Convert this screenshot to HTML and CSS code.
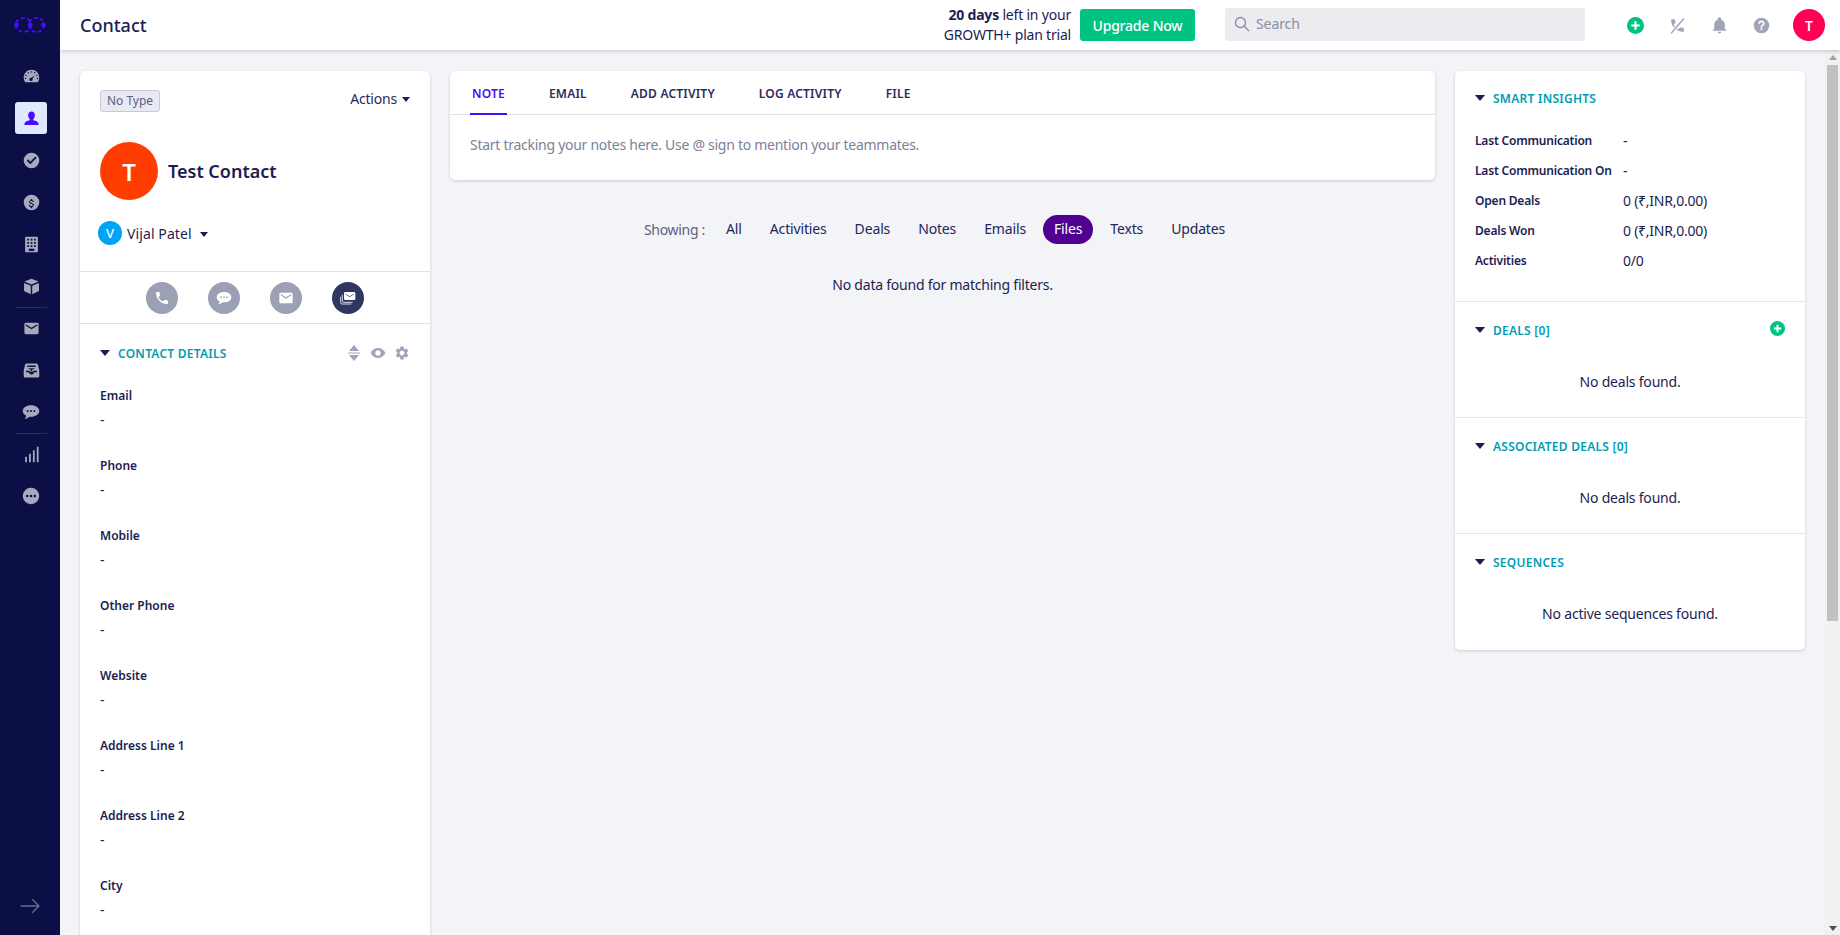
FILE: index.html
```html
<!DOCTYPE html>
<html lang="en">
<head>
<meta charset="utf-8">
<title>Contact</title>
<link rel="stylesheet" href="styles.css">
</head>
<body>
<svg class="sprite" aria-hidden="true">
  <symbol id="i-mail" viewBox="0 0 24 24"><path d="M20 4H4c-1.1 0-2 .9-2 2v12c0 1.1.9 2 2 2h16c1.1 0 2-.9 2-2V6c0-1.1-.9-2-2-2zm0 4l-8 5-8-5V6l8 5 8-5v2z"/></symbol>
  <symbol id="i-phone" viewBox="0 0 24 24"><path d="M6.62 10.79c1.44 2.83 3.76 5.14 6.59 6.59l2.2-2.2c.27-.27.67-.36 1.02-.24 1.12.37 2.33.57 3.57.57.55 0 1 .45 1 1V20c0 .55-.45 1-1 1-9.39 0-17-7.61-17-17 0-.55.45-1 1-1h3.5c.55 0 1 .45 1 1 0 1.25.2 2.45.57 3.57.11.35.03.74-.25 1.02l-2.2 2.2z"/></symbol>
  <symbol id="i-chat" viewBox="0 0 24 24"><path fill-rule="evenodd" d="M12 3C5.900 3 1 6.400 1 10.700c0 2.600 1.800 4.900 4.600 6.300-.1 1.500-.9 3-2 4 2.300-.1 4.600-1.100 6.300-2.800.7.100 1.400.2 2.100.2 6.100 0 11-3.400 11-7.700S18.100 3 12 3zM7.500 9.400a1.300 1.300 0 1 1 0 2.600 1.300 1.300 0 0 1 0-2.600zm4.500 0a1.300 1.300 0 1 1 0 2.600 1.300 1.300 0 0 1 0-2.600zm4.500 0a1.300 1.300 0 1 1 0 2.600 1.300 1.300 0 0 1 0-2.600z"/></symbol>
  <symbol id="i-plus" viewBox="0 0 16 16"><circle cx="8" cy="8" r="8" fill="#00c382"/><path d="M8 4v8M4 8h8" stroke="#fff" stroke-width="2" fill="none"/></symbol>
  <symbol id="i-caret" viewBox="0 0 10 6"><path d="M0 0h10L5 6z"/></symbol>
</svg>

<div class="app">
  <nav class="sidebar">
    <svg class="logo" viewBox="0 0 32 16" fill="none" stroke="#4a0cff" stroke-width="1.600">
      <ellipse cx="9.500" cy="8" rx="8" ry="7" stroke-dasharray="4 2.500"/>
      <ellipse cx="22.500" cy="8" rx="8" ry="7" stroke-dasharray="4 2.500"/>
      <circle cx="2.500" cy="8" r="2.400" fill="#4a0cff" stroke="none"/>
      <circle cx="16" cy="8" r="2.400" fill="#4a0cff" stroke="none"/>
      <circle cx="29.500" cy="8" r="2.400" fill="#4a0cff" stroke="none"/>
    </svg>
    <ul class="nav-list">
      <li class="nav-item"><svg class="nav-icon" viewBox="0 0 24 24"><path fill-rule="evenodd" d="M12 2.500C5.900 2.500 1 7.400 1 13.500c0 2.200.6 4.200 1.600 6l1 .5h16.800l1-.5c1-1.800 1.600-3.800 1.600-6 0-6.100-4.900-11-11-11zm0 2a1 1 0 1 1 0 2 1 1 0 0 1 0-2zM7.500 5.800a1 1 0 1 1 0 2 1 1 0 0 1 0-2zm9 0a1 1 0 1 1 0 2 1 1 0 0 1 0-2zM4.300 9.500a1 1 0 1 1 0 2 1 1 0 0 1 0-2zm15.400 0a1 1 0 1 1 0 2 1 1 0 0 1 0-2zM3.500 13.800a1 1 0 1 1 0 2 1 1 0 0 1 0-2zm17 0a1 1 0 1 1 0 2 1 1 0 0 1 0-2zm-3.900-3.200l-3.200 4.400a2.300 2.300 0 1 1-1.500-1.200l4.700-3.200z"/></svg></li>
      <li class="nav-item is-active"><svg class="nav-icon" viewBox="0 0 24 24"><path d="M12 2c-3 0-4.700 2.300-4.700 5.300 0 2.400 1 4.300 2.200 5.400v1.600C6 15 2.500 16 2 19.500V21h20v-1.500c-.5-3.500-4-4.500-7.500-5.200v-1.600c1.200-1.100 2.200-3 2.200-5.400C16.700 4.300 15 2 12 2z"/></svg></li>
      <li class="nav-item"><svg class="nav-icon" viewBox="0 0 24 24"><path fill-rule="evenodd" d="M12 1a11 11 0 1 0 0 22 11 11 0 0 0 0-22zm-1.700 16.200l-5-5 1.800-1.800 3.200 3.200 7.200-7.200 1.800 1.800z"/></svg></li>
      <li class="nav-item"><svg class="nav-icon" viewBox="0 0 24 24"><path fill-rule="evenodd" d="M12 1a11 11 0 1 0 0 22 11 11 0 0 0 0-22zm1.100 17.400V20h-2.200v-1.600c-1.500-.3-2.700-1.300-2.800-3h1.700c.1 1 .8 1.600 2.200 1.600 1.500 0 1.800-.8 1.800-1.200 0-.6-.3-1.200-2-1.600-1.900-.5-3.200-1.300-3.200-2.900 0-1.400 1.100-2.300 2.300-2.600V7h2.200v1.700c1.500.4 2.200 1.500 2.300 2.700h-1.700c0-.9-.5-1.500-1.700-1.500-1.200 0-1.900.5-1.900 1.300 0 .7.500 1.100 2 1.500 1.600.4 3.200 1.100 3.200 3 0 1.400-1 2.200-2.200 2.700z"/></svg></li>
      <li class="nav-item"><svg class="nav-icon" viewBox="0 0 24 24"><path fill-rule="evenodd" d="M4 1h16a1 1 0 0 1 1 1v20a1 1 0 0 1-1 1H4a1 1 0 0 1-1-1V2a1 1 0 0 1 1-1zm2 3v2.500h2.500V4zm4.700 0v2.500h2.600V4zm4.800 0v2.500H18V4zM6 8.500V11h2.500V8.500zm4.700 0V11h2.600V8.500zm4.800 0V11H18V8.500zM6 13v2.500h2.500V13zm4.700 0v2.500h2.600V13zm4.800 0v2.500H18V13zM8 18v3h8v-3z"/></svg></li>
      <li class="nav-item nav-item-sep"><svg class="nav-icon" viewBox="0 0 24 24"><path d="M12 1L2 5l10 4 10-4zM1.500 7v11.500L11 23V11zM22.500 7L13 11v12l9.500-4.500z"/></svg></li>
      <li class="nav-item"><svg class="nav-icon"><use href="#i-mail"/></svg></li>
      <li class="nav-item"><svg class="nav-icon" viewBox="0 0 24 24"><path fill-rule="evenodd" d="M5 2h14a2 2 0 0 1 2 1.500L23 12v8a2 2 0 0 1-2 2H3a2 2 0 0 1-2-2v-8l2-8.500A2 2 0 0 1 5 2zm1 3v2h12V5zm-1.800 7.500v2H8c.5 1.700 2 3 4 3s3.500-1.300 4-3h3.800v-2H14.500v1.200h-5v-1.200zM8 8.700v1.600h3V13h2v-2.700h3V8.700z"/></svg></li>
      <li class="nav-item nav-item-sep"><svg class="nav-icon nav-icon-lg"><use href="#i-chat"/></svg></li>
      <li class="nav-item"><svg class="nav-icon" viewBox="0 0 24 24"><path d="M3 15h2.500v8H3zM8.500 11H11v12H8.500zM14 6h2.500v17H14zM19.500 1H22v22h-2.500z"/></svg></li>
      <li class="nav-item"><svg class="nav-icon nav-icon-lg" viewBox="0 0 24 24"><path fill-rule="evenodd" d="M12 1a11 11 0 1 0 0 22 11 11 0 0 0 0-22zM7 10.300a1.700 1.700 0 1 1 0 3.400 1.700 1.700 0 0 1 0-3.400zm5 0a1.700 1.700 0 1 1 0 3.400 1.700 1.700 0 0 1 0-3.400zm5 0a1.700 1.700 0 1 1 0 3.400 1.700 1.700 0 0 1 0-3.400z"/></svg></li>
    </ul>
    <svg class="collapse" viewBox="0 0 22 18" fill="none" stroke="#6b6e8c" stroke-width="1.500"><path d="M0 9h20.500M13 1.500L20.500 9 13 16.500"/></svg>
  </nav>

  <div class="main">
    <header class="topbar">
      <h1 class="page-title">Contact</h1>
      <p class="trial"><b>20 days</b> left in your<br>GROWTH+ plan trial</p>
      <button class="upgrade">Upgrade Now</button>
      <div class="search">
        <svg class="search-icon" viewBox="0 0 16 16" fill="none" stroke="#8a8da3" stroke-width="1.300"><circle cx="6.500" cy="6.500" r="5"/><path d="M10.200 10.200L15 15"/></svg>
        <span>Search</span>
      </div>
      <div class="top-icons">
        <svg class="top-icon"><use href="#i-plus"/></svg>
        <svg class="top-icon top-gray" viewBox="0 0 24 24"><path d="M6.620 10.790c1.440 2.830 3.760 5.140 6.590 6.590l2.200-2.200c.27-.27.67-.36 1.020-.24 1.120.37 2.330.57 3.570.57.55 0 1 .45 1 1V20c0 .55-.45 1-1 1-9.390 0-17-7.610-17-17 0-.55.45-1 1-1h3.500c.55 0 1 .45 1 1 0 1.250.2 2.450.57 3.570.11.35.03.74-.25 1.020l-2.200 2.200z"/><path d="M21 2L3 23" stroke="#fff" stroke-width="4.500"/><path d="M21 2L3 23" stroke="#a0a4b8" stroke-width="2"/></svg>
        <svg class="top-icon top-gray" viewBox="0 0 24 24"><path d="M12 23c1.300 0 2.400-1 2.400-2.300H9.600C9.600 22 10.700 23 12 23zm7.500-6.500V11c0-3.500-1.900-6.400-5-7.200v-.9a2.500 2.500 0 0 0-5 0v.9c-3.100.8-5 3.700-5 7.200v5.500L2 19v.5h20V19z"/></svg>
        <svg class="top-icon top-gray" viewBox="0 0 24 24"><path fill-rule="evenodd" d="M12 1a11 11 0 1 0 0 22 11 11 0 0 0 0-22zm1.200 17.500h-2.500V16h2.500zm2.600-7.600c-.6.900-1.300 1.400-1.800 1.900-.6.600-.9 1-.9 2.200h-2.400c0-1.800.7-2.700 1.400-3.300.7-.7 1.800-1.200 1.800-2.500 0-1-.8-1.800-1.900-1.800s-2 .8-2 2H7.600c0-2.500 2-4.300 4.400-4.300 2.500 0 4.400 1.700 4.400 4 0 .7-.2 1.300-.6 1.800z"/></svg>
      </div>
      <div class="top-avatar">T</div>
    </header>

    <div class="body">
      <div class="columns">
        <aside class="card left-card">
          <div class="left-head">
            <span class="tag">No Type</span>
            <span class="actions">Actions <svg class="caret caret-small"><use href="#i-caret"/></svg></span>
          </div>
          <div class="identity">
            <div class="big-avatar">T</div>
            <h2 class="contact-name">Test Contact</h2>
          </div>
          <div class="owner">
            <span class="owner-avatar">V</span>
            <span class="owner-name">Vijal Patel</span>
            <svg class="caret caret-small"><use href="#i-caret"/></svg>
          </div>
          <div class="quick">
            <span class="quick-btn"><svg class="quick-icon"><use href="#i-phone"/></svg></span>
            <span class="quick-btn"><svg class="quick-icon"><use href="#i-chat"/></svg></span>
            <span class="quick-btn"><svg class="quick-icon"><use href="#i-mail"/></svg></span>
            <span class="quick-btn is-dark">
              <svg class="quick-icon" viewBox="0 0 24 24"><path d="M8 3h13a2 2 0 0 1 2 2v8a2 2 0 0 1-2 2H8a2 2 0 0 1-2-2V5a2 2 0 0 1 2-2zm0 2.500v1l6.500 4 6.500-4v-1l-6.500 4z" fill-rule="evenodd"/><path d="M3.500 7v9.500a2 2 0 0 0 2 2H19M1 10v9a2 2 0 0 0 2 2h14" fill="none" stroke="#fff" stroke-width="1.200"/></svg>
            </span>
          </div>
          <section class="details">
            <div class="section-head">
              <svg class="caret"><use href="#i-caret"/></svg>
              <h3 class="section-title">CONTACT DETAILS</h3>
              <div class="section-tools">
                <svg class="tool" viewBox="0 0 12 16"><path d="M6 0l5 6H1zM6 16l5-6H1z"/><path d="M0 8h12" stroke="#a0a4b8"/></svg>
                <svg class="tool" viewBox="0 0 24 24"><path fill-rule="evenodd" d="M12 4.500C7 4.500 2.700 7.600 1 12c1.700 4.400 6 7.500 11 7.500s9.300-3.100 11-7.500c-1.700-4.400-6-7.500-11-7.500zm0 3.500a4 4 0 1 1 0 8 4 4 0 0 1 0-8z"/></svg>
                <svg class="tool" viewBox="0 0 24 24"><path d="M19.140 12.940c.04-.3.06-.61.06-.94 0-.32-.02-.64-.07-.94l2.030-1.580c.18-.14.23-.41.12-.61l-1.920-3.320c-.12-.22-.37-.29-.59-.22l-2.390.96c-.5-.38-1.030-.7-1.620-.94l-.36-2.540c-.04-.24-.24-.41-.48-.41h-3.840c-.24 0-.43.17-.47.41l-.36 2.540c-.59.24-1.130.57-1.620.94l-2.390-.96c-.22-.08-.47 0-.59.22L2.740 8.870c-.12.21-.08.47.12.61l2.030 1.580c-.05.3-.09.63-.09.94s.02.64.07.94l-2.030 1.580c-.18.14-.23.41-.12.61l1.920 3.320c.12.22.37.29.59.22l2.390-.96c.5.38 1.030.7 1.620.94l.36 2.540c.05.24.24.41.48.41h3.840c.24 0 .44-.17.47-.41l.36-2.540c.59-.24 1.130-.56 1.620-.94l2.390.96c.22.08.47 0 .59-.22l1.920-3.320c.12-.22.07-.47-.12-.61l-2.010-1.580zM12 15.600c-1.980 0-3.600-1.620-3.600-3.600s1.620-3.600 3.600-3.600 3.600 1.620 3.600 3.600-1.620 3.600-3.600 3.600z"/></svg>
              </div>
            </div>
            <dl class="field-list">
              <div class="field"><dt>Email</dt><dd>-</dd></div>
              <div class="field"><dt>Phone</dt><dd>-</dd></div>
              <div class="field"><dt>Mobile</dt><dd>-</dd></div>
              <div class="field"><dt>Other Phone</dt><dd>-</dd></div>
              <div class="field"><dt>Website</dt><dd>-</dd></div>
              <div class="field"><dt>Address Line 1</dt><dd>-</dd></div>
              <div class="field"><dt>Address Line 2</dt><dd>-</dd></div>
              <div class="field"><dt>City</dt><dd>-</dd></div>
            </dl>
          </section>
        </aside>

        <main class="center">
          <div class="card note-card">
            <div class="tabs">
              <span class="tab is-active">NOTE</span>
              <span class="tab">EMAIL</span>
              <span class="tab">ADD ACTIVITY</span>
              <span class="tab">LOG ACTIVITY</span>
              <span class="tab">FILE</span>
            </div>
            <p class="note-hint">Start tracking your notes here. Use @ sign to mention your teammates.</p>
          </div>
          <div class="filters">
            <span class="filter-label">Showing :</span>
            <span class="filter">All</span>
            <span class="filter">Activities</span>
            <span class="filter">Deals</span>
            <span class="filter">Notes</span>
            <span class="filter">Emails</span>
            <span class="filter is-active">Files</span>
            <span class="filter">Texts</span>
            <span class="filter">Updates</span>
          </div>
          <p class="empty">No data found for matching filters.</p>
        </main>

        <aside class="card right-card">
          <section class="panel panel-insights">
            <div class="section-head">
              <svg class="caret"><use href="#i-caret"/></svg>
              <h3 class="section-title">SMART INSIGHTS</h3>
            </div>
            <div class="insight"><b>Last Communication</b><span>-</span></div>
            <div class="insight"><b>Last Communication On</b><span>-</span></div>
            <div class="insight"><b>Open Deals</b><span>0 (₹,INR,0.00)</span></div>
            <div class="insight"><b>Deals Won</b><span>0 (₹,INR,0.00)</span></div>
            <div class="insight"><b>Activities</b><span>0/0</span></div>
          </section>
          <section class="panel">
            <div class="section-head">
              <svg class="caret"><use href="#i-caret"/></svg>
              <h3 class="section-title">DEALS [0]</h3>
              <svg class="add-icon"><use href="#i-plus"/></svg>
            </div>
            <p class="panel-empty">No deals found.</p>
          </section>
          <section class="panel">
            <div class="section-head">
              <svg class="caret"><use href="#i-caret"/></svg>
              <h3 class="section-title">ASSOCIATED DEALS [0]</h3>
            </div>
            <p class="panel-empty">No deals found.</p>
          </section>
          <section class="panel">
            <div class="section-head">
              <svg class="caret"><use href="#i-caret"/></svg>
              <h3 class="section-title">SEQUENCES</h3>
            </div>
            <p class="panel-empty">No active sequences found.</p>
          </section>
        </aside>
      </div>
      <div class="scrollbar"><span class="sb-up"></span><span class="sb-thumb"></span><span class="sb-down"></span></div>
    </div>
  </div>
</div>
</body>
</html>
```

FILE: styles.css
```css
* { box-sizing: border-box; }
html, body { height: 100%; margin: 0; overflow: hidden; }
body { font-family: "Noto Sans", "Open Sans", sans-serif; font-size: 14px; color: #1c1d52; background: #f3f4f7; }
h1, h2, h3, p, ul, dl, dd { margin: 0; padding: 0; }
ul { list-style: none; }
.sprite { display: none; }
.app { display: flex; height: 935px; }

.sidebar { width: 60px; flex: none; background: #0b0f45; display: flex; flex-direction: column; align-items: center; padding-top: 17px; }
.logo { width: 32px; height: 16px; flex: none; }
.nav-list { display: flex; flex-direction: column; align-items: center; width: 32px; margin-top: 27px; margin-left: 2px; }
.nav-item { width: 32px; height: 32px; margin-bottom: 10px; display: flex; align-items: center; justify-content: center; border-radius: 3px; fill: #a7aabd; flex: none; position: relative; }
.nav-item.is-active { background: #e0e8ff; fill: #4a0cff; }
.nav-item-sep::after { content: ""; position: absolute; left: 0; right: 0; bottom: -6px; height: 1px; background: #2a2d61; }
.nav-icon { width: 17px; height: 17px; }
.nav-icon-lg { width: 18px; height: 18px; }
.collapse { width: 21px; height: 16px; margin-top: auto; margin-bottom: 21px; }

.main { flex: 1; min-width: 0; display: flex; flex-direction: column; }
.topbar { height: 50px; flex: none; background: #fff; display: flex; align-items: center; padding: 0 15px 0 20px; box-shadow: 0 1px 4px rgba(40, 44, 90, .25); position: relative; z-index: 2; }
.page-title { font-size: 18px; font-weight: 500; margin-right: auto; }
.trial { text-align: right; font-size: 14px; line-height: 20px; letter-spacing: -.2px; }
.upgrade { width: 115px; height: 32px; margin-left: 9px; border: 0; border-radius: 3px; background: #00c382; color: #fff; font: 500 14px "Noto Sans", sans-serif; letter-spacing: -.2px; padding: 0; }
.search { width: 360px; height: 33px; margin: -1px 0 0 30px; background: #ebebf0; border-radius: 3px; display: flex; align-items: center; color: #8a8da3; padding: 0 0 2px 9px; gap: 6px; font-size: 14px; letter-spacing: -.1px; }
.search-icon { width: 16px; height: 16px; }
.top-icons { display: flex; align-items: center; margin-left: 42px; gap: 25px; }
.top-icon { width: 17px; height: 17px; }
.top-gray { fill: #a0a4b8; }
.top-avatar { width: 32px; height: 32px; margin-left: 23px; border-radius: 50%; background: #ff0055; color: #fff; display: flex; align-items: center; justify-content: center; font-weight: 600; font-size: 14px; }

.body { flex: 1; min-height: 0; display: flex; }
.columns { flex: 1; min-width: 0; display: flex; align-items: flex-start; gap: 20px; padding: 21px 20px 0; }
.card { background: #fff; border-radius: 5px; box-shadow: 0 1px 3px rgba(40, 44, 90, .2); }

.left-card { width: 350px; flex: none; height: 900px; }
.left-head { display: flex; justify-content: space-between; align-items: flex-start; padding: 19px 20px 0; height: 71px; }
.tag { height: 22px; width: 60px; border: 1px solid #c7c9da; background: #e8e9f2; border-radius: 3px; font-size: 12px; line-height: 20px; text-align: center; color: #5d5f82; }
.actions { font-size: 14px; line-height: 18px; color: #2a2c5e; display: flex; align-items: center; gap: 5px; letter-spacing: -.2px; }
.caret { width: 10px; height: 6px; flex: none; fill: #1c1d52; }
.caret-small { width: 8px; height: 5px; }
.identity { display: flex; align-items: center; padding-left: 20px; gap: 10px; }
.big-avatar { width: 58px; height: 58px; border-radius: 50%; background: #ff3d00; color: #fff; display: flex; align-items: center; justify-content: center; font-size: 24px; font-weight: 600; }
.contact-name { font-size: 18px; font-weight: 600; }
.owner { display: flex; align-items: flex-start; padding: 21px 0 0 18px; height: 71px; gap: 5px; }
.owner-avatar { width: 24px; height: 24px; border-radius: 50%; background: #00a4f4; color: #fff; display: flex; align-items: center; justify-content: center; font-size: 13px; font-weight: 500; }
.owner-name { font-size: 14px; line-height: 25px; margin-right: 3px; letter-spacing: .1px; }
.owner .caret { margin-top: 11px; }
.quick { height: 53px; border-top: 1px solid #e0e1ea; border-bottom: 1px solid #e0e1ea; display: flex; justify-content: center; align-items: center; gap: 30px; }
.quick-btn { width: 32px; height: 32px; border-radius: 50%; background: #9ca0b4; display: flex; align-items: center; justify-content: center; fill: #fff; }
.quick-btn.is-dark { background: #2f3661; }
.quick-icon { width: 16px; height: 16px; }

.details { padding: 20px 20px 0; }
.section-head { display: flex; align-items: center; height: 18px; gap: 8px; }
.section-title { font-size: 12px; font-weight: 600; color: #009cb4; letter-spacing: .25px; }
.section-tools { margin-left: auto; display: flex; align-items: center; gap: 8px; fill: #a0a4b8; }
.tool { width: 16px; height: 16px; }
.field-list { margin-top: 26px; }
.field { height: 70px; }
.field dt { font-size: 12px; font-weight: 600; line-height: 16px; }
.field dd { font-size: 14px; line-height: 18px; margin-top: 7px; }

.center { flex: 1; min-width: 0; }
.note-card { height: 109px; }
.tabs { height: 44px; border-bottom: 1px solid #e0e1ea; display: flex; gap: 40px; padding: 0 20px; }
.tab { font-size: 12px; font-weight: 600; line-height: 45px; color: #2a2c5e; padding: 0 2px; height: 44px; letter-spacing: .2px; }
.tab.is-active { color: #4a0cff; border-bottom: 2px solid #4a0cff; }
.note-hint { color: #7d8199; padding: 20px 20px 0; line-height: 20px; font-size: 14px; letter-spacing: -.27px; }
.filters { display: flex; align-items: center; justify-content: center; height: 29px; margin-top: 35px; padding-right: 2px; }
.filter-label { color: #5c5f7e; margin-right: 7px; letter-spacing: -.3px; }
.filter { padding: 0 11px; height: 29px; line-height: 28px; border-radius: 15px; margin: 0 3px; color: #23255c; letter-spacing: -.15px; }
.filter.is-active { background: #4f0090; color: #fff; }
.empty { text-align: center; margin-top: 31px; line-height: 20px; letter-spacing: -.23px; }

.right-card { width: 350px; flex: none; height: 579px; }
.panel { padding: 19px 20px 0; height: 116px; border-bottom: 1px solid #e4e5ec; }
.panel:last-child { border-bottom: 0; }
.panel-insights { height: 231px; padding-top: 18px; }
.panel-insights .section-head { margin-bottom: 18px; }
.insight { display: flex; height: 30px; align-items: center; }
.insight b { width: 148px; font-size: 12px; font-weight: 600; letter-spacing: -.2px; }
.insight span { font-size: 14px; letter-spacing: -.25px; }
.panel-empty { text-align: center; margin-top: 33px; line-height: 20px; letter-spacing: -.2px; }
.add-icon { width: 15px; height: 15px; margin-left: auto; margin-top: -4px; }

.scrollbar { width: 15px; flex: none; background: #f1f1f1; display: flex; flex-direction: column; align-items: center; position: relative; }
.sb-thumb { width: 11px; height: 556px; background: #c1c1c1; margin-top: 5px; }
.sb-up { width: 0; height: 0; margin-top: 5px; border: 4px solid transparent; border-top: 0; border-bottom: 5px solid #a3a3a3; }
.sb-down { width: 0; height: 0; margin-top: auto; margin-bottom: 4px; border: 4px solid transparent; border-bottom: 0; border-top: 5px solid #505050; }
```
